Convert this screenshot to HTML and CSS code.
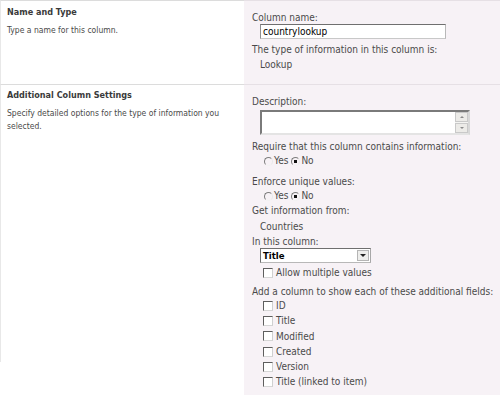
FILE: index.html
```html
<!DOCTYPE html>
<html lang="en">
<head>
  <meta charset="UTF-8">
  <title>Create Column</title>
  <link rel="stylesheet" href="styles.css">
</head>
<body>
  <div class="settings">
    <!-- Name and Type -->
    <div class="section section-name">
      <div class="info">
        <h3>Name and Type</h3>
        <p>Type a name for this column.</p>
      </div>
      <div class="controls">
        <div class="label name-label">Column name:</div>
        <input class="text-input" type="text" value="countrylookup">
        <div class="label type-label">The type of information in this column is:</div>
        <div class="value">Lookup</div>
      </div>
    </div>

    <!-- Additional Column Settings -->
    <div class="section section-extra">
      <div class="info">
        <h3>Additional Column Settings</h3>
        <p>Specify detailed options for the type of information you selected.</p>
      </div>
      <div class="controls">
        <div class="label">Description:</div>
        <div class="memo">
          <textarea></textarea>
          <div class="scrollbar">
            <span class="scroll-btn up"></span>
            <span class="scroll-btn down"></span>
          </div>
        </div>

        <div class="label gap-require">Require that this column contains information:</div>
        <div class="radio-row">
          <label><input type="radio" name="required"> Yes</label>
          <label><input type="radio" name="required" checked> No</label>
        </div>

        <div class="label gap-unique">Enforce unique values:</div>
        <div class="radio-row">
          <label><input type="radio" name="unique"> Yes</label>
          <label><input type="radio" name="unique" checked> No</label>
        </div>

        <div class="label gap-small">Get information from:</div>
        <div class="value source">Countries</div>

        <div class="label column-label">In this column:</div>
        <div class="dropdown">
          <span class="dropdown-text">Title</span>
          <span class="drop-btn"></span>
        </div>
        <label class="check-row multi"><input type="checkbox"> Allow multiple values</label>

        <div class="label fields-label">Add a column to show each of these additional fields:</div>
        <div class="field-list">
          <label class="check-row"><input type="checkbox"> ID</label>
          <label class="check-row"><input type="checkbox"> Title</label>
          <label class="check-row"><input type="checkbox"> Modified</label>
          <label class="check-row"><input type="checkbox"> Created</label>
          <label class="check-row"><input type="checkbox"> Version</label>
          <label class="check-row"><input type="checkbox"> Title (linked to item)</label>
        </div>
      </div>
    </div>
  </div>
</body>
</html>
```

FILE: styles.css
```css
/* Column settings form */
:root {
  --panel: #f7f2f6;
  --text: #4a4a4a;
  --heading: #3a3a3a;
  --rule: #dcdcdc;
  --rule-light: #e6e0e5;
}

body {
  margin: 0;
  background: #fff;
  font-family: "DejaVu Sans Condensed", "DejaVu Sans", sans-serif;
  font-stretch: condensed;
  color: var(--text);
  height: 395px;
  overflow: hidden;
}

.section {
  display: grid;
  grid-template-columns: 244px 1fr;
}

.section-name {
  height: 84px;
}

.section-extra {
  height: 311px;
}

/* Left description column */
.info {
  border-top: 1px solid var(--rule);
  border-left: 1px solid #e8e8e8;
  padding: 4px 6px 0;
}

.section-name .info {
  padding-top: 5px;
}

.section-extra .info {
  align-self: start;
  height: 273px;
}

.info h3 {
  margin: 0;
  font-size: 9px;
  line-height: 13px;
  font-weight: bold;
  color: var(--heading);
}

.info p {
  margin: 5px 0 0;
  font-size: 8.5px;
  line-height: 13px;
}

/* Right controls column */
.controls {
  border-top: 1px solid var(--rule-light);
  background: var(--panel);
  padding: 10px 0 0 8px;
  font-size: 10px;
  white-space: nowrap;
}

.label {
  line-height: 14px;
}

.name-label {
  line-height: 13px;
}

.value {
  line-height: 14px;
  padding-left: 8px;
}

.type-label {
  margin-top: 3px;
  line-height: 15px;
}

.type-label + .value {
  line-height: 15px;
}

.gap-require { margin-top: 5px; }
.gap-unique { margin-top: 7px; }
.gap-small { margin-top: 1px; }
.source { margin-top: 2px; }

.column-label {
  margin-top: 1px;
  line-height: 13px;
}

.fields-label {
  margin-top: 5px;
  line-height: 13px;
}

/* Text box */
.text-input {
  display: block;
  margin: 0 0 0 8px;
  width: 186px;
  height: 15px;
  box-sizing: border-box;
  padding: 0 2px;
  border: 1px solid;
  border-color: #6f6f6f #b8b8b8 #c8c8c8 #8f8f8f;
  background: #fff;
  font-family: inherit;
  font-stretch: condensed;
  font-size: 10px;
  color: #000;
  outline: none;
}

/* Description box */
.memo {
  display: flex;
  margin: 1px 0 0 8px;
  width: 210px;
  height: 25px;
  box-sizing: border-box;
  border: 2px solid;
  border-color: #7a7a7a #d8d8d8 #e4e4e4 #7a7a7a;
  background: #fff;
}

.memo textarea {
  flex: 1;
  border: none;
  resize: none;
  padding: 0;
  outline: none;
  background: #fff;
}

.scrollbar {
  width: 13px;
  display: flex;
  flex-direction: column;
  justify-content: space-between;
  background: #f4f4f2;
}

.scroll-btn {
  height: 10px;
  box-sizing: border-box;
  border: 1px solid #c9c9c9;
  background: #ecebe8;
  display: flex;
  align-items: center;
  justify-content: center;
}

.scroll-btn::after {
  content: '';
  border-left: 2px solid transparent;
  border-right: 2px solid transparent;
}

.scroll-btn.up::after {
  border-bottom: 2px solid #8a8a8a;
}

.scroll-btn.down::after {
  border-top: 2px solid #8a8a8a;
}

/* Radios */
.radio-row {
  display: flex;
  gap: 3px;
  padding-left: 12px;
  line-height: 14px;
}

.radio-row label {
  display: flex;
  align-items: center;
}

input[type="radio"] {
  appearance: none;
  margin: 0 1px 0 0;
  width: 9px;
  height: 9px;
  border-radius: 50%;
  border: 1px solid;
  border-color: #7d7d7d #e8e8e8 #f2f2f2 #7d7d7d;
  background: transparent;
}

input[type="radio"]:checked {
  background: radial-gradient(circle, #111 0 1.6px, transparent 2px);
}

/* Dropdown */
.dropdown {
  display: flex;
  margin-left: 8px;
  width: 111px;
  height: 15px;
  box-sizing: border-box;
  border: 1px solid;
  border-color: #6f6f6f #a8a8a8 #b8b8b8 #6f6f6f;
  background: #fff;
}

.dropdown-text {
  flex: 1;
  padding-left: 2px;
  font-weight: bold;
  color: #000;
  line-height: 13px;
  font-size: 9.5px;
}

.drop-btn {
  width: 12px;
  margin: 1px;
  box-sizing: border-box;
  border: 1px solid #b5b5b5;
  background: #eeeeec;
  display: flex;
  align-items: center;
  justify-content: center;
}

.drop-btn::after {
  content: '';
  border-left: 3px solid transparent;
  border-right: 3px solid transparent;
  border-top: 3px solid #222;
}

/* Checkboxes */
.check-row {
  display: flex;
  align-items: center;
  padding-left: 11px;
  line-height: 15.3px;
}

.multi {
  margin-top: 3px;
  line-height: 14px;
}

input[type="checkbox"] {
  appearance: none;
  margin: 0 3px 0 0;
  width: 10px;
  height: 10px;
  box-sizing: border-box;
  border: 1px solid;
  border-color: #5e5e5e #d0d0d0 #d6d6d6 #5e5e5e;
  background: #fff;
}
```
